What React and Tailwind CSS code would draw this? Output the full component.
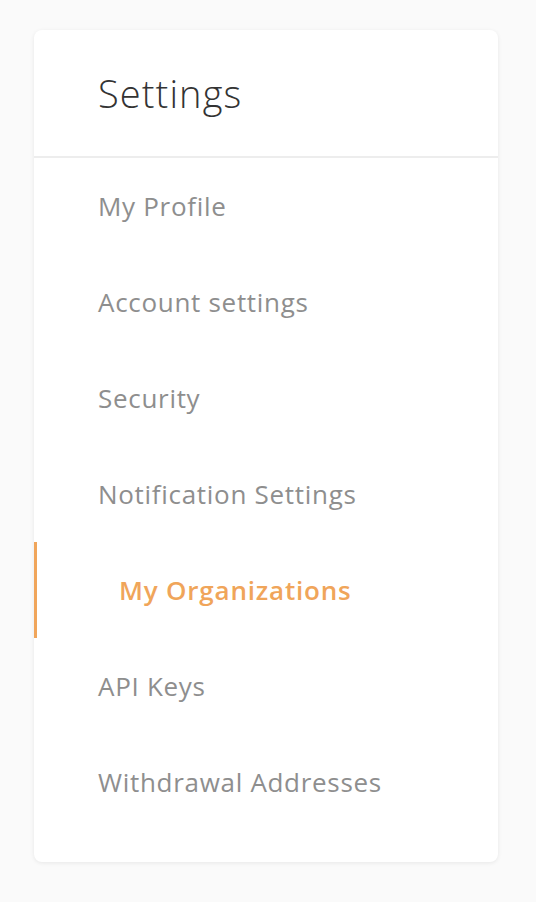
import React from 'react';

const items = [
  'My Profile',
  'Account settings',
  'Security',
  'Notification Settings',
  'My Organizations',
  'API Keys',
  'Withdrawal Addresses',
];

export default function App() {
  const active = 'My Organizations';

  return (
    <div
      className="min-h-[902px] w-[536px] bg-[#fafafa] pt-[30px] pl-[34px]"
      style={{ fontFamily: '"Open Sans", "Noto Sans", sans-serif' }}
    >
      <div className="w-[464px] rounded-lg bg-white pb-[32px] shadow-[0_1px_4px_rgba(0,0,0,0.08)]">
        <div className="flex h-[128px] items-center border-b-2 border-[#ededed] pl-[64px] pt-[1px]">
          <h1 className="text-[38px] font-light tracking-[1.1px] text-[#333333]">Settings</h1>
        </div>
        <nav className="flex flex-col">
          {items.map((label) => {
            const isActive = label === active;
            return (
              <a
                key={label}
                href="#"
                className={
                  isActive
                    ? 'flex h-[96px] items-center border-l-[3px] border-[#f0a55a] pl-[82px] text-[26px] font-semibold tracking-[0.8px] text-[#f0a55a]'
                    : 'flex h-[96px] items-center pl-[64px] text-[26px] tracking-[0.7px] text-[#8e8e8e]'
                }
              >
                {label}
              </a>
            );
          })}
        </nav>
      </div>
    </div>
  );
}
